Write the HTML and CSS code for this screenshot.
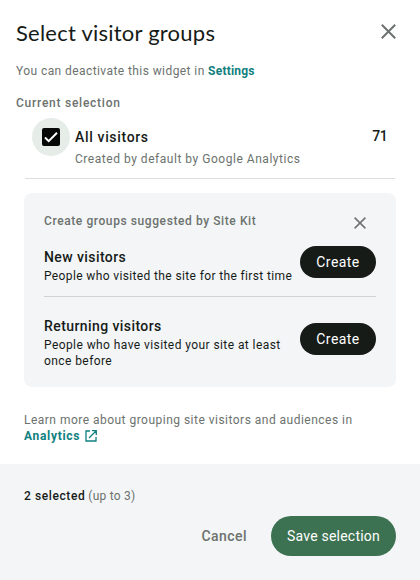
FILE: index.html
```html
<!DOCTYPE html>
<html lang="en">
<head>
<meta charset="utf-8">
<title>Select visitor groups</title>
<link rel="stylesheet" href="styles.css">
</head>
<body>
<main class="panel">
  <header class="header">
    <div class="title-row">
      <h1 class="title">Select visitor groups</h1>
      <button class="close" aria-label="Close"><svg width="15" height="15" viewBox="0 0 15 15"><path d="M.8.8l13.4 13.4M14.2.8L.8 14.2"/></svg></button>
    </div>
    <p class="intro">You can deactivate this widget in <a href="#">Settings</a></p>
  </header>
  <section class="selection">
    <h2 class="label">Current selection</h2>
    <div class="group">
      <span class="check"><svg width="18" height="18" viewBox="0 0 18 18"><rect width="18" height="18" rx="2"/><path d="M3 9.5l3.7 3.7L15 4.8"/></svg></span>
      <div class="group-text">
        <h3 class="name all">All visitors</h3>
        <p class="source">Created by default by Google Analytics</p>
      </div>
      <span class="count">71</span>
    </div>
  </section>
  <section class="suggest">
    <div class="suggest-head">
      <h2 class="label">Create groups suggested by Site Kit</h2>
      <button class="close small" aria-label="Dismiss"><svg width="12" height="12" viewBox="0 0 12 12"><path d="M.6.6l10.8 10.8M11.4.6L.6 11.4"/></svg></button>
    </div>
    <div class="item first">
      <div><h3 class="name">New visitors</h3><p class="desc">People who visited the site for the first time</p></div>
      <button class="create">Create</button>
    </div>
    <div class="item">
      <div><h3 class="name">Returning visitors</h3><p class="desc">People who have visited your site at least<br>once before</p></div>
      <button class="create">Create</button>
    </div>
  </section>
  <p class="learn">Learn more about grouping site visitors and audiences in <a href="#">Analytics<svg width="12" height="12" viewBox="0 0 12 12"><path d="M5 1H1v10h10V7M7 .7h4.3V5M11 1L4 8"/></svg></a></p>
  <footer class="footer">
    <p class="status"><b>2 selected</b> <span>(up to 3)</span></p>
    <div class="actions"><button class="cancel">Cancel</button><button class="save">Save selection</button></div>
  </footer>
</main>
</body>
</html>
```
FILE: styles.css
```css
* { box-sizing: border-box; margin: 0; padding: 0; }
body { width: 420px; height: 580px; overflow: hidden; background: #fff; color: #161b18; font: 12px/16px Roboto, sans-serif; }
button { border: 0; background: none; font-family: inherit; }
svg { display: block; fill: none; stroke: #6c726e; }
a { color: #108080; font-weight: 700; text-decoration: none; }
.panel { height: 580px; display: flex; flex-direction: column; }
.header { padding: 18px 24px 0 16px; }
.title-row { display: flex; justify-content: space-between; height: 32px; }
.title { font: 400 22px/30px Lato, sans-serif; letter-spacing: .23px; }
.close { height: 27px; display: flex; align-items: center; }
.close svg { stroke-width: 2; }
.intro { margin-top: 13px; color: #6c726e; letter-spacing: .42px; }
.intro a { letter-spacing: .2px; }
.selection { margin-top: 16px; }
.label { font-size: 12px; line-height: 16px; font-weight: 500; color: #6c726e; letter-spacing: .59px; }
.selection .label { margin-left: 16px; letter-spacing: .75px; }
.group { display: flex; margin: 7px 25px 0; height: 61px; padding-left: 7px; border-bottom: 1px solid #dbdedc; }
.check { width: 38px; height: 38px; border-radius: 50%; background: #e6ece8; display: grid; place-items: center; }
.check rect { fill: #050806; stroke: none; }
.check path { stroke: #fff; stroke-width: 2; }
.group-text { margin-left: 5px; flex: 1; padding-top: 9px; }
.name { font-size: 14px; line-height: 20px; font-weight: 500; letter-spacing: .42px; }
.all { letter-spacing: .66px; }
.source { margin-top: 4px; color: #6c726e; letter-spacing: .53px; }
.count { font-size: 14px; line-height: 20px; font-weight: 500; letter-spacing: -.6px; margin: 8px 8px 0; }
.suggest { margin: 14px 24px 0; height: 194px; border-radius: 8px; background: #f3f5f7; padding: 20px 20px 0; }
.suggest-head { display: flex; justify-content: space-between; height: 20px; }
.suggest-head .close { height: 20px; margin-right: 10px; }
.small svg { stroke-width: 1.5; }
.item { display: flex; justify-content: space-between; padding-top: 19px; }
.item .desc { padding-top: 1px; }
.item.first { height: 64px; padding-top: 13px; border-bottom: 1px solid #cfd3d0; }
.item.first .name { padding-top: 1px; }
.desc { white-space: nowrap; letter-spacing: .42px; }
.item.first .desc { letter-spacing: .37px; }
.create { width: 76px; height: 32px; border-radius: 16px; background: #161b18; color: #fff; font-size: 14px; letter-spacing: .45px; flex: none; }
.item:not(.first) .create { margin-top: 7px; }
.learn { margin: 25px 24px 0; color: #6c726e; letter-spacing: .48px; }
.learn a { display: flex; align-items: center; gap: 5px; letter-spacing: .7px; }
.learn svg { stroke: #108080; stroke-width: 1.3; }
.footer { margin-top: auto; height: 116px; background: #f3f5f7; padding: 24px; }
.status b { font-weight: 500; letter-spacing: .6px; }
.status span { color: #6c726e; letter-spacing: .22px; }
.actions { display: flex; justify-content: flex-end; margin-top: 12px; gap: 24px; }
.actions button { font-size: 14px; height: 40px; }
.actions .cancel { color: #6c726e; font-weight: 500; letter-spacing: .45px; }
.actions .save { width: 125px; border-radius: 20px; background: #3c7251; color: #fff; letter-spacing: .22px; }
```
